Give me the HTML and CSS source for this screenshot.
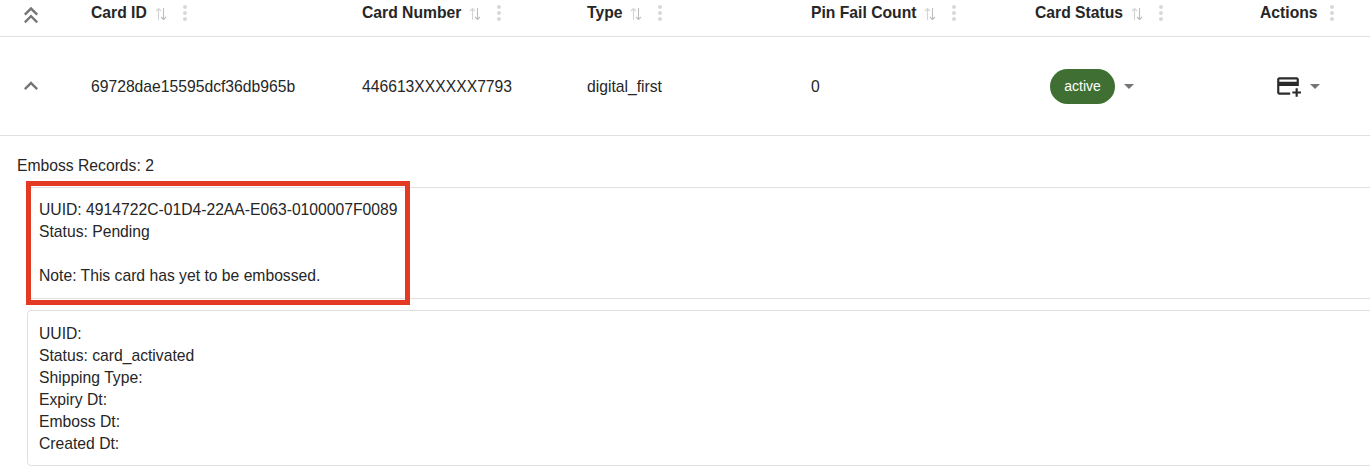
FILE: index.html
```html
<!DOCTYPE html>
<html lang="en">
<head>
    <meta charset="UTF-8">
    <meta name="viewport" content="width=device-width, initial-scale=1.0">
    <title>Cards</title>
    <link rel="stylesheet" href="styles.css">
</head>
<body>
<svg class="defs" width="0" height="0">
    <symbol id="sort" viewBox="0 0 12 14">
        <path d="M3.5 13V1.5M1 4l2.500-2.500L6 4" fill="none" stroke="#d4d4d4" stroke-width="1.100"/>
        <path d="M8.500 1v11.500M6 10l2.500 2.500L11 10" fill="none" stroke="#bdbdbd" stroke-width="1.100"/>
    </symbol>
    <symbol id="more" viewBox="0 0 24 24">
        <path d="M12 8c1.100 0 2-.9 2-2s-.9-2-2-2-2 .9-2 2 .9 2 2 2zm0 2c-1.100 0-2 .9-2 2s.9 2 2 2 2-.9 2-2-.9-2-2-2zm0 6c-1.100 0-2 .9-2 2s.9 2 2 2 2-.9 2-2-.9-2-2-2z" fill="currentColor"/>
    </symbol>
    <symbol id="caret" viewBox="0 0 24 24">
        <path d="M7 10l5 5 5-5z" fill="currentColor"/>
    </symbol>
</svg>

<div class="table">
    <div class="grid head">
        <div class="cell toggle">
            <svg class="chevron" viewBox="0 0 24 24"><path d="M6 17.590 7.410 19 12 14.420 16.590 19 18 17.590l-6-6z"/><path d="m6 11 1.410 1.410L12 7.830l4.590 4.580L18 11l-6-6z"/></svg>
        </div>
        <div class="cell">Card ID<svg class="sort"><use href="#sort"/></svg><svg class="more"><use href="#more"/></svg></div>
        <div class="cell">Card Number<svg class="sort"><use href="#sort"/></svg><svg class="more"><use href="#more"/></svg></div>
        <div class="cell">Type<svg class="sort"><use href="#sort"/></svg><svg class="more"><use href="#more"/></svg></div>
        <div class="cell">Pin Fail Count<svg class="sort"><use href="#sort"/></svg><svg class="more"><use href="#more"/></svg></div>
        <div class="cell">Card Status<svg class="sort"><use href="#sort"/></svg><svg class="more"><use href="#more"/></svg></div>
        <div class="cell">Actions<svg class="more near"><use href="#more"/></svg></div>
    </div>

    <div class="grid row">
        <div class="cell toggle">
            <svg class="chevron" viewBox="0 0 24 24"><path d="M7.410 15.410 12 10.830l4.590 4.580L18 14l-6-6-6 6z"/></svg>
        </div>
        <div class="cell text">69728dae15595dcf36db965b</div>
        <div class="cell text">446613XXXXXX7793</div>
        <div class="cell text">digital_first</div>
        <div class="cell text">0</div>
        <div class="cell status">
            <span class="chip">active</span>
            <svg class="caret"><use href="#caret"/></svg>
        </div>
        <div class="cell actions">
            <svg class="add-card" viewBox="0 0 24 24"><path d="M20 4H4c-1.110 0-1.990.89-1.990 2L2 18c0 1.110.89 2 2 2h10v-2H4v-6h18V6c0-1.110-.89-2-2-2zm0 4H4V6h16v2zm4 9v2h-3v3h-2v-3h-3v-2h3v-3h2v3h3z"/></svg>
            <svg class="caret"><use href="#caret"/></svg>
        </div>
    </div>

    <div class="detail">
        <div class="title">Emboss Records: 2</div>
        <div class="record first">
            <div>UUID: 4914722C-01D4-22AA-E063-0100007F0089</div>
            <div>Status: Pending</div>
            <br>
            <div>Note: This card has yet to be embossed.</div>
            <div class="highlight"></div>
        </div>
        <div class="record second">
            <div>UUID:</div>
            <div>Status: card_activated</div>
            <div>Shipping Type:</div>
            <div>Expiry Dt:</div>
            <div>Emboss Dt:</div>
            <div>Created Dt:</div>
        </div>
    </div>
</div>
</body>
</html>
```

FILE: styles.css
```css
* {
    margin: 0;
    padding: 0;
    box-sizing: border-box;
}

html, body {
    width: 100%;
    height: 100%;
    overflow: hidden;
}

body {
    background: #fff;
    color: #262626;
    font-family: "Liberation Sans", Arial, sans-serif;
    font-size: 15.7px;
    line-height: 22px;
}

.defs {
    position: absolute;
}

.grid {
    display: grid;
    grid-template-columns: 91px 271px 225px 224px 224px 225px 110px;
    border-bottom: 1px solid #e0e0e0;
}

.cell {
    display: flex;
    align-items: center;
}

.head {
    height: 37px;
    font-weight: 700;
}

.head .cell {
    align-items: flex-start;
    padding-top: 2px;
}

.head .toggle {
    padding-top: 1px;
}

.row {
    height: 99px;
}

.text {
    padding-top: 2px;
}

.toggle {
    padding-left: 17px;
}

.chevron {
    width: 28px;
    height: 28px;
    fill: #757575;
}

.sort {
    width: 12px;
    height: 14px;
    margin-left: 8px;
    margin-top: 5px;
}

.more {
    width: 24px;
    height: 24px;
    margin-left: 6px;
    margin-top: -1px;
    color: #d8d8d8;
}

.more.near {
    margin-left: 2px;
}

.status {
    padding-left: 15px;
}

.chip {
    display: flex;
    align-items: center;
    justify-content: center;
    width: 65px;
    height: 35px;
    border-radius: 18px;
    background: #3f6f32;
    color: #fff;
    font-size: 14px;
}

.caret {
    width: 24px;
    height: 24px;
    margin-left: 2px;
    color: #757575;
}

.actions {
    padding-left: 15px;
}

.add-card {
    width: 26px;
    height: 26px;
    fill: #2b2b2b;
}

.detail {
    padding: 19px 0 0 17px;
}

.title {
    margin-bottom: 10px;
}

.record {
    margin-left: 10px;
    margin-right: -12px;
    padding: 11px 11px 11px;
    border: 1px solid #e0e0e0;
    border-radius: 4px;
}

.first {
    position: relative;
    height: 112px;
    margin-bottom: 11px;
}

.second {
    height: 156px;
    padding-top: 12px;
}

.highlight {
    position: absolute;
    top: -7px;
    left: -2px;
    width: 384px;
    height: 124px;
    border: 5px solid #e43a24;
}
```
